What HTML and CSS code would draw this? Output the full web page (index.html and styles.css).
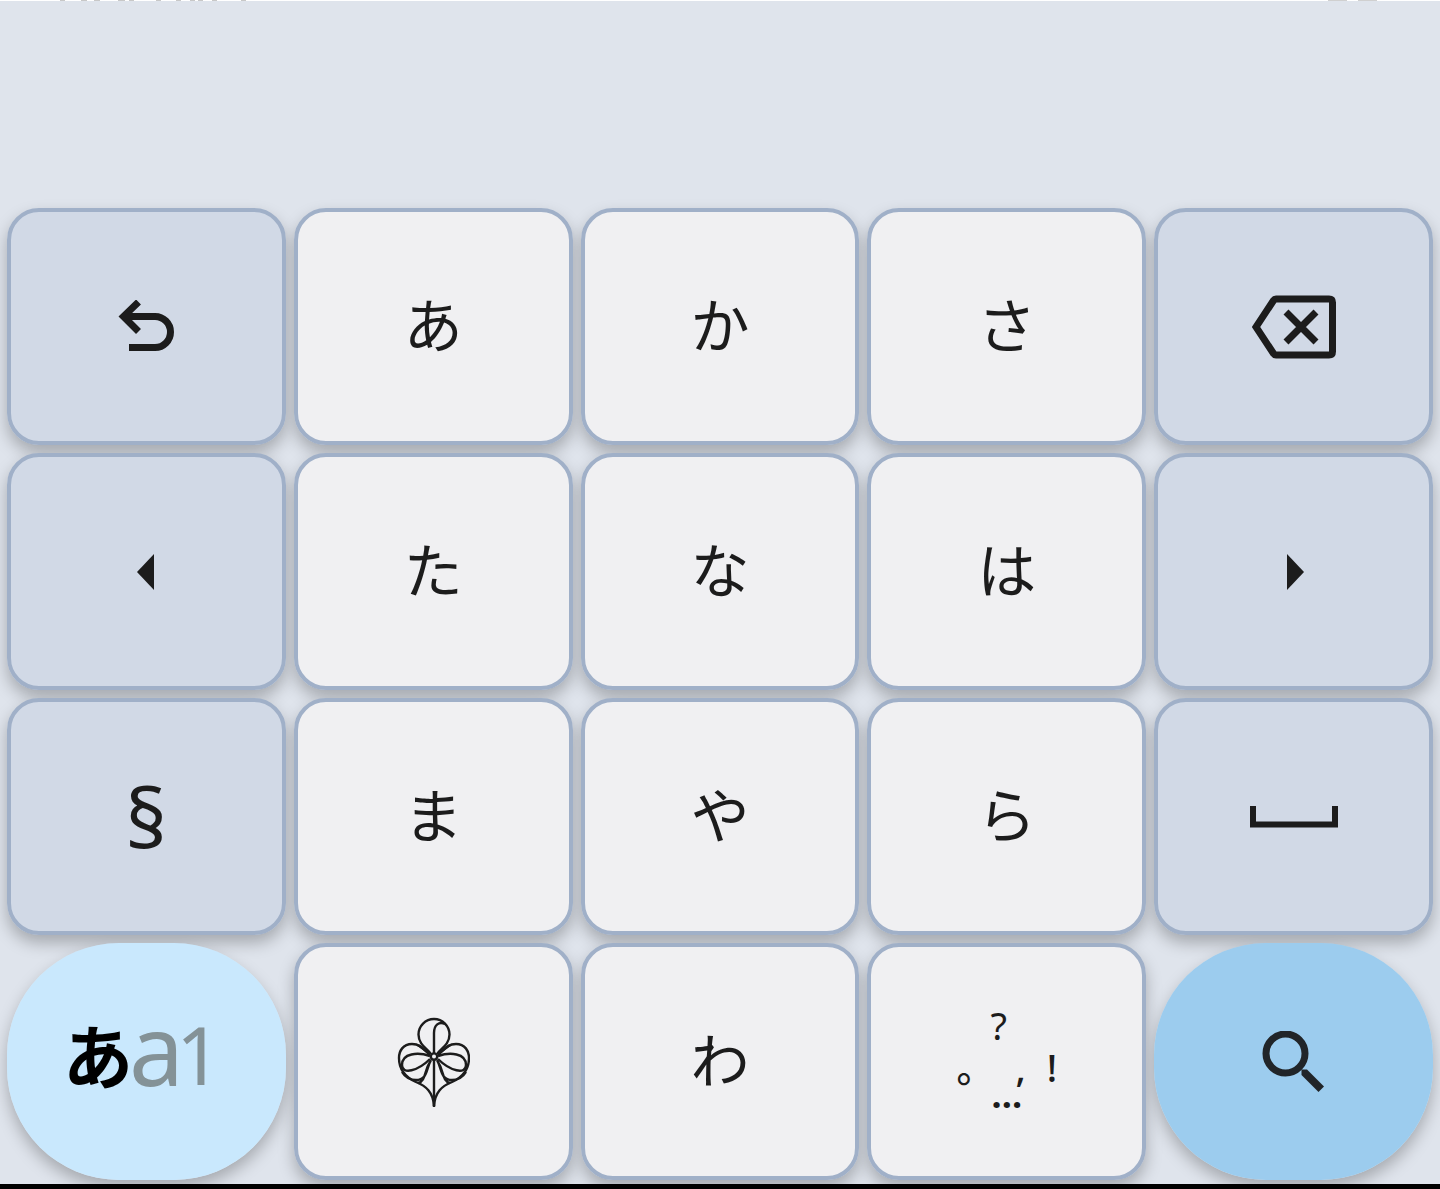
FILE: index.html
```html
<!DOCTYPE html>
<html lang="ja">
<head>
	<meta charset="UTF-8">
	<meta name="viewport" content="width=device-width, initial-scale=1">
	<title>Keyboard</title>
	<link rel="stylesheet" href="styles.css">
</head>
<body>
	<div class="edge">
		<svg width="320" height="1"><path d="M60 .5h5M81 .5h6M94 .5h6M118 .5h7M129 .5h5M156 .5h5M176 .5h5M190 .5h5M198 .5h5M212 .5h5M241 .5h5" stroke="#c8c8c8"/></svg>
		<svg width="112" height="1"><path d="M0 .5h19M30 .5h19" stroke="#d0d0d0"/></svg>
	</div>
	<div class="candidates"></div>
	<main class="keys">
		<button class="key side" aria-label="戻す">
			<svg width="56" height="54" viewBox="0 0 56 54" fill="none" stroke="#1c1c1c" stroke-width="7">
				<path d="M20.500 2L5.500 16.500L20.500 31.500M6 16.500H37A15.500 15.500 0 0 1 37 47.500H11"/>
			</svg>
		</button>
		<button class="key">あ</button>
		<button class="key">か</button>
		<button class="key">さ</button>
		<button class="key side" aria-label="削除">
			<svg width="84" height="64" viewBox="0 0 84 64" fill="none" stroke="#1c1c1c" stroke-width="7">
				<path d="M24 4H77Q80.500 4 80.500 7.500V56.500Q80.500 60 77 60H24Q22.500 60 21.500 58.500L4 32L21.500 5.500Q22.500 4 24 4Z"/>
				<path d="M34 17L64 47M64 17L34 47"/>
			</svg>
		</button>

		<button class="key side" aria-label="左">
			<svg width="18" height="36" viewBox="0 0 18 36"><path d="M17 0V36L0 18Z" fill="#1c1c1c"/></svg>
		</button>
		<button class="key">た</button>
		<button class="key">な</button>
		<button class="key">は</button>
		<button class="key side" aria-label="右">
			<svg width="20" height="36" viewBox="0 0 20 36"><path d="M3 0V36L20 18Z" fill="#1c1c1c"/></svg>
		</button>

		<button class="key side symbol">§</button>
		<button class="key">ま</button>
		<button class="key">や</button>
		<button class="key">ら</button>
		<button class="key side" aria-label="空白">
			<svg width="88" height="22" viewBox="0 0 88 22"><path d="M3 0V18.500H85V0" fill="none" stroke="#1c1c1c" stroke-width="6"/></svg>
		</button>

		<button class="key pill mode"><span class="kana">あ</span><span class="latin">a</span><span class="digit">1</span></button>
		<button class="key icon" aria-label="花">
			<svg width="74" height="92" viewBox="12 11 74 92" fill="none" stroke="#1c1c1c" stroke-width="2.400">
				<!-- top petal -->
				<path d="M47 49C44 44 34.500 40 34.500 29.500A15.500 15.500 0 0 1 65.500 29.500C65.500 40 56 44 53 49"/>
				<path d="M50 48V28C50 20 55 16 61 19"/>
				<!-- stem -->
				<path d="M50 55V102"/>
				<!-- outer lobes -->
				<path d="M46 50C40 45 37 39 28 39C19 39 15 46 15 53C15 65 21 72 32 77C42 81 49 87 50 101"/>
				<path d="M54 50C60 45 63 39 72 39C81 39 85 46 85 53C85 65 79 72 68 77C58 81 51 87 50 101"/>
				<!-- inner petals -->
				<path d="M46 51C34 47 18 48 18 60C18 70 34 66 46 54"/>
				<path d="M54 51C66 47 82 48 82 60C82 70 66 66 54 54"/>
				<path d="M47 55C42 63 44 75 32 75C26 75 21 72 18 67M46 57C40 66 42 76 34 78"/>
				<path d="M53 55C58 63 56 75 68 75C74 75 79 72 82 67M54 57C60 66 58 76 66 78"/>
				<path d="M46 49L34 40M54 49L66 40"/>
				<circle cx="50" cy="51.600" r="3.200" fill="#f0f0f2"/>
			</svg>
		</button>
		<button class="key">わ</button>
		<button class="key punct">
			<span class="row top">?</span>
			<span class="row middle"><span>。</span><span>,</span><span>!</span></span>
			<span class="row dots">…</span>
		</button>
		<button class="key pill search" aria-label="検索">
			<svg width="64" height="62" viewBox="0 0 64 62" fill="none" stroke="#212529">
				<circle cx="23.500" cy="22.500" r="19.500" stroke-width="7"/>
				<path d="M39.500 38.500H45L62 55.500L56.500 61L39.500 44Z" fill="#212529" stroke="none"/>
			</svg>
		</button>
	</main>
	<footer class="navbar"></footer>
</body>
</html>
```
FILE: styles.css
```css
* { box-sizing: border-box; margin: 0; padding: 0; }
body {
	display: flex;
	flex-direction: column;
	min-height: 100vh;
	background-color: #dfe4ec;
	font-family: "Noto Sans CJK JP", sans-serif;
}
svg { display: block; flex: none; }
.edge {
	display: flex;
	justify-content: space-between;
	height: 1px;
	background-color: #fff;
}
.candidates { height: 207px; }
.keys {
	position: relative;
	z-index: 0;
	flex: 1;
	display: grid;
	grid-template-columns: repeat(5, 1fr);
	grid-auto-rows: 1fr;
	gap: 8px;
	padding: 0 7px 4px;
}
.key {
	position: relative;
	display: flex;
	align-items: center;
	justify-content: center;
	min-width: 0;
	padding-bottom: 8px;
	border: 4px solid #a0b0c8;
	border-radius: 32px;
	background-color: #f0f0f2;
	color: #1c1c1c;
	font-family: inherit;
	font-size: 59px;
	line-height: 64px;
}
/* shadow sits under all the keys */
.key::before {
	content: "";
	position: absolute;
	inset: -4px;
	z-index: -1;
	border-radius: inherit;
	box-shadow: 0 8px 16px rgba(0, 0, 0, 0.26);
}
.side, .icon { padding-bottom: 0; }
.side { background-color: #d1d9e6; }
.symbol {
	font-family: "Noto Sans", sans-serif;
	font-size: 82px;
}
.pill {
	padding-bottom: 0;
	border: none;
	border-radius: 112px;
}
.pill::before { inset: 0; }
.mode {
	padding: 0 8px 16px 0;
	background-color: #c9e8fd;
}
.mode span { line-height: 100px; }
.kana {
	color: #000;
	font-size: 70px;
	font-weight: 700;
}
.latin, .digit {
	color: #849297;
	font-family: "Noto Sans", sans-serif;
}
.latin {
	margin-left: -4px;
	padding-bottom: 12px;
	font-size: 98px;
}
.digit {
	margin-left: -8px;
	font-size: 80px;
}
.search { background-color: #9cccee; }
.punct {
	flex-direction: column;
	padding-bottom: 18px;
	font-family: "Noto Sans", "Noto Sans CJK JP", sans-serif;
	font-size: 38px;
}
.row {
	height: 42px;
	line-height: 42px;
}
.top { padding-right: 16px; }
.middle {
	display: flex;
	align-items: baseline;
	gap: 21px;
	font-weight: 500;
}
.dots {
	height: 14px;
	font-size: 36px;
	font-weight: 700;
	line-height: 14px;
}
.navbar {
	height: 5px;
	background-color: #000;
}
```
